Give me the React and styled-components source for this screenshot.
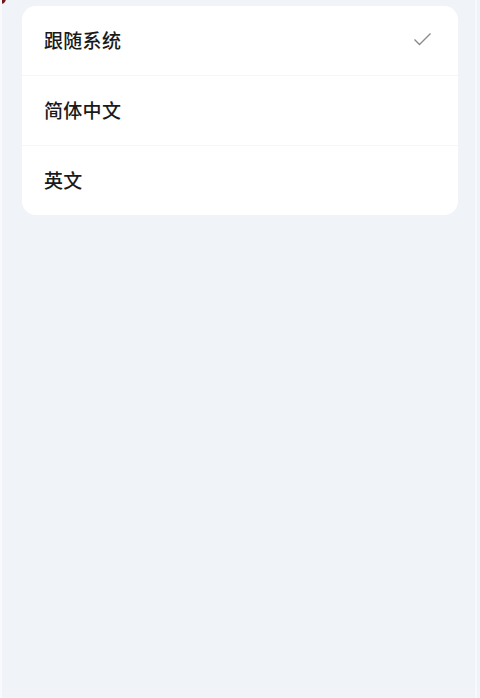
import React from "react";
import styled, { createGlobalStyle } from "styled-components";

const Global = createGlobalStyle`
  html, body { margin: 0; padding: 0; background: #f0f3f8; }
  body { font-family: "Noto Sans CJK SC", "Noto Sans", sans-serif; }
`;

const Page = styled.div`
  position: relative;
  box-sizing: border-box;
  width: 480px;
  height: 698px;
  background: #f0f3f8;
  border-left: 2px solid #f7f9fc;
  padding: 6px 22px 0 20px;
  overflow: hidden;
`;

const Dot = styled.div`
  position: absolute;
  left: -7px;
  top: -7px;
  width: 11px;
  height: 11px;
  border-radius: 50%;
  background: #6e1a1a;
`;

const EdgeStrip = styled.div`
  position: absolute;
  top: 0;
  bottom: 0;
  left: 473px;
  width: 2px;
  background: #f6f8fb;
`;

const Card = styled.div`
  background: #ffffff;
  border-radius: 14px;
  overflow: hidden;
`;

const Row = styled.div`
  display: flex;
  align-items: center;
  justify-content: space-between;
  padding: 0 26px 2px 22px;
  border-top: ${(p) => (p.$first ? "none" : "1px solid #f5f6f8")};
  box-sizing: border-box;
  height: ${(p) => (p.$first ? "69px" : "70px")};
`;

const Label = styled.span`
  font-size: 19px;
  color: #1a1a1a;
  font-weight: 500;
  letter-spacing: 0.3px;
`;

const Check = () => (
  <svg width="19" height="15" viewBox="0 0 19 15" fill="none">
    <path d="M1.5 7.5 L6.5 12.5 L17.5 1.5" stroke="#8a8a8a" strokeWidth="1.4" />
  </svg>
);

const items = ["跟随系统", "简体中文", "英文"];

export default function App() {
  return (
    <>
      <Global />
      <Page>
        <Dot />
        <EdgeStrip />
        <Card>
          {items.map((t, i) => (
            <Row key={t} $first={i === 0}>
              <Label>{t}</Label>
              {i === 0 && <Check />}
            </Row>
          ))}
        </Card>
      </Page>
    </>
  );
}
